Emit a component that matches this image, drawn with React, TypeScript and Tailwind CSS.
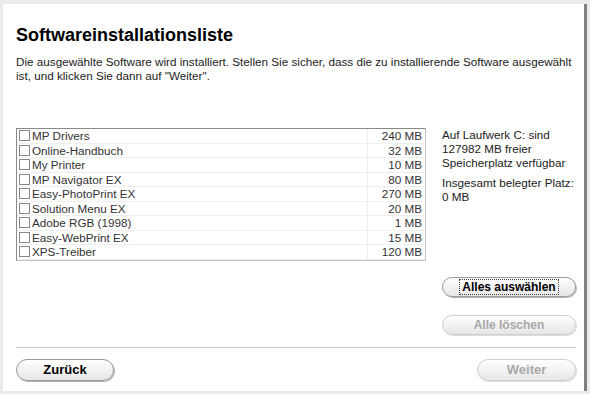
const items: [string, string][] = [
  ["MP Drivers", "240 MB"],
  ["Online-Handbuch", "32 MB"],
  ["My Printer", "10 MB"],
  ["MP Navigator EX", "80 MB"],
  ["Easy-PhotoPrint EX", "270 MB"],
  ["Solution Menu EX", "20 MB"],
  ["Adobe RGB (1998)", "1 MB"],
  ["Easy-WebPrint EX", "15 MB"],
  ["XPS-Treiber", "120 MB"],
];

const pill =
  "h-[20px] rounded-full border border-[#9a9a9a] bg-gradient-to-b from-white to-[#e6e6e6] shadow-[1px_1px_0_#b5b5b5] text-[12px] font-bold";

export default function App() {
  return (
    <div
      className="w-[590px] h-[394px] bg-[#ebebeb] pt-[4px] pl-[3px] pb-[3px] overflow-hidden"
      style={{ fontFamily: '"Liberation Sans", Arial, sans-serif' }}
    >
      <div className="w-[584px] h-[387px] bg-white border-r-[3px] border-[#808080] flex flex-col pl-[13px] pr-[8px]">
        <h1 className="mt-[20px] text-[18px] leading-[22px] font-bold text-black">
          Softwareinstallationsliste
        </h1>
        <p className="mt-[9px] text-[11.7px] leading-[14px] text-[#222] whitespace-nowrap">
          Die ausgewählte Software wird installiert. Stellen Sie sicher, dass die zu installierende Software ausgewählt
          <br />
          ist, und klicken Sie dann auf "Weiter".
        </p>

        <div className="mt-[45px] flex gap-[16px]">
          <div className="w-[410px] h-[133px] border border-[#c4c4c4] border-t-[#8a8a8a] border-l-[#8a8a8a]">
            {items.map(([name, size]) => (
              <div key={name} className="flex h-[14.5px] border-b border-[#eeeeee] text-[11.7px] leading-[13.5px] text-[#333]">
                <div className="flex items-center flex-1 pl-[2px]">
                  <span className="w-[11px] h-[11px] border border-[#888] bg-white mr-[2px] shrink-0" />
                  <span>{name}</span>
                </div>
                <div className="w-[58px] border-l border-[#eeeeee] text-right pr-[3px]">{size}</div>
              </div>
            ))}
          </div>

          <div className="flex-1 text-[11.7px] leading-[14px] text-[#222] whitespace-nowrap">
            <p>
              Auf Laufwerk C: sind
              <br />
              127982 MB freier
              <br />
              Speicherplatz verfügbar
            </p>
            <p className="mt-[6px]">
              Insgesamt belegter Platz:
              <br />
              0 MB
            </p>
          </div>
        </div>

        <div className="flex flex-col items-end mt-[16px] gap-[18px]">
          <button className={`${pill} w-[134px] text-black`}>
            <span className="outline outline-1 outline-dotted outline-[#444] px-[2px]">Alles auswählen</span>
          </button>
          <button className={`${pill} w-[134px] text-[#a8a8a8] border-[#cfcfcf] shadow-[1px_1px_0_#dddddd] font-semibold`}>
            Alle löschen
          </button>
        </div>

        <div className="mt-[12px] border-t border-[#c8c8c8]" />

        <div className="flex justify-between mt-[11px]">
          <button className={`${pill} w-[98px] h-[22px] text-[13px] text-black`}>Zurück</button>
          <button className={`${pill} w-[99px] h-[22px] text-[13px] text-[#a8a8a8] border-[#cfcfcf] shadow-[1px_1px_0_#dddddd] font-semibold`}>
            Weiter
          </button>
        </div>
      </div>
    </div>
  );
}
